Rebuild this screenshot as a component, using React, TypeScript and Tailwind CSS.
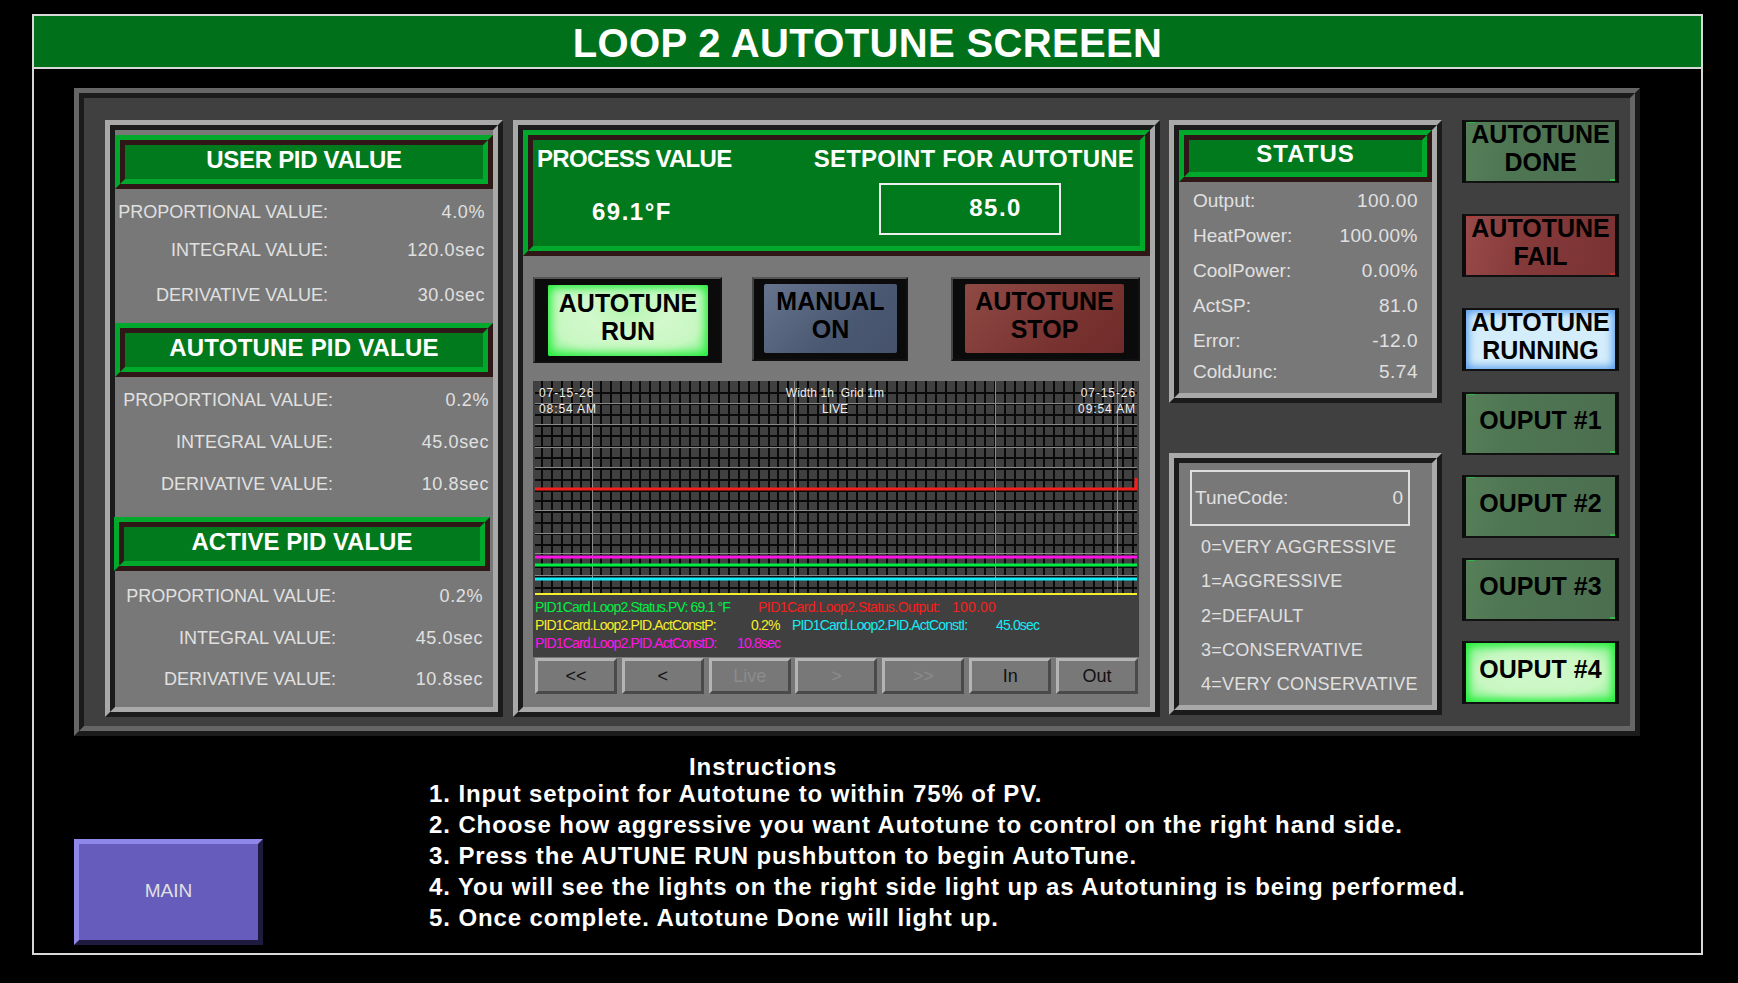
import type { ReactNode } from 'react'

const thin = 'text-[#e0e0e0] font-normal'

// double mitred border used by all the grey panels
function Panel({ className, children }: { className: string; children: ReactNode }) {
    return (
        <div className={`border-[5px] border-t-[#a9a9a9] border-l-[#a9a9a9] border-b-[#1b1b1b] border-r-[#1b1b1b] ${className}`}>
            <div className="h-full border-[5px] border-t-[#1b1b1b] border-l-[#1b1b1b] border-b-[#a9a9a9] border-r-[#a9a9a9] bg-[#787878]">
                {children}
            </div>
        </div>
    )
}

function GreenBox({ className, children }: { className: string; children: ReactNode }) {
    return (
        <div className={`border-[5px] border-t-[#00a92c] border-l-[#00a92c] border-b-[#301717] border-r-[#301717] ${className}`}>
            <div className="h-full border-[5px] border-t-[#301717] border-l-[#301717] border-b-[#00a92c] border-r-[#00a92c] bg-[#007a1c]">
                {children}
            </div>
        </div>
    )
}

function GreenTitle({ text, className, textClass }: { text: string; className: string; textClass?: string }) {
    return (
        <GreenBox className={className}>
            <div className={`flex h-full items-center justify-center pb-[4px] text-[24px] font-bold text-white ${textClass ?? ''}`}>{text}</div>
        </GreenBox>
    )
}

function PidRow({ label, value, labelClass, rowClass }: { label: string; value: string; labelClass: string; rowClass: string }) {
    return (
        <div className={`flex h-[30px] items-center justify-between pt-[1px] text-[18px] whitespace-nowrap ${thin} ${rowClass}`}>
            <span className={`text-right ${labelClass}`}>{label}</span>
            <span className="tracking-[0.6px]">{value}</span>
        </div>
    )
}

function StatusRow({ label, value, rowClass }: { label: string; value: string; rowClass: string }) {
    return (
        <div className={`flex h-[30px] items-center justify-between pr-[14px] pl-[14px] text-[19px] ${thin} ${rowClass}`}>
            <span>{label}</span>
            <span className="tracking-[0.5px]">{value}</span>
        </div>
    )
}

function Indicator({ lines, fill, glint, className }: { lines: string[]; fill: string; glint?: string; className: string }) {
    return (
        <div className={`h-[63px] w-[157px] border-y-2 border-x-[4px] border-y-[#111] border-x-[#0c0c0c] ${className}`}>
            <div className={`relative flex h-full flex-col items-center justify-center pb-[8px] text-[25px] leading-[28px] font-bold text-black ${fill}`}>
                {glint && <div className={`absolute top-0 left-[2px] h-[1px] w-[7px] ${glint}`} />}
                {glint && <div className={`absolute right-0 bottom-0 h-[2px] w-[5px] ${glint}`} />}
                {lines.map((l) => (
                    <div key={l}>{l}</div>
                ))}
            </div>
        </div>
    )
}

function PushButton({ lines, fill, frame, className }: { lines: string[]; fill: string; frame: string; className: string }) {
    return (
        <div className={`border-2 border-t-[#555] border-l-[#444] border-r-[#111] border-b-[#111] bg-[#0b0b0b] ${frame} ${className}`}>
            <div className={`flex h-full flex-col items-center justify-center rounded-[2px] pb-[8px] text-[25px] leading-[28px] font-bold text-black ${fill}`}>
                {lines.map((l) => (
                    <div key={l}>{l}</div>
                ))}
            </div>
        </div>
    )
}

function NavButton({ text, off }: { text: string; off?: boolean }) {
    return (
        <div
            className={`flex h-[36px] w-[82px] items-center justify-center border-[3px] border-t-[#b4b4b4] border-l-[#b4b4b4] border-b-[#4a4a4a] border-r-[#4a4a4a] bg-[#787878] text-[18px] ${off ? 'text-[#8c8c8c]' : 'text-[#111]'}`}
        >
            {text}
        </div>
    )
}

function Chart() {
    const minorH: number[] = []
    for (let y = 12; y < 216; y += 10.85) minorH.push(Math.round(y))
    const minorV: number[] = []
    for (let x = 9; x < 604; x += 9.85) minorV.push(Math.round(x))
    const majorH = [22, 43, 66, 86, 108, 129, 152, 172, 194]
    const majorV = [59, 261, 462, 584]
    const traces = [
        { y: 176, color: '#ff14e6', w: 3 },
        { y: 184, color: '#00ee44', w: 3 },
        { y: 198, color: '#14ecf5', w: 3 },
        { y: 213, color: '#f5ee2a', w: 2 },
    ]
    return (
        <div className="relative h-[216px] w-[606px] bg-[#404040]">
            <svg width="606" height="216" className="block">
                {minorV.map((x) => (
                    <line key={x} x1={x} x2={x} y1="0" y2="214" stroke="#0a0a0a" strokeWidth="2" />
                ))}
                {minorH.map((y) => (
                    <line key={y} x1="2" x2="604" y1={y} y2={y} stroke="#0a0a0a" strokeWidth="2" />
                ))}
                {majorH.map((y) => (
                    <line key={y} x1="2" x2="604" y1={y + 0.5} y2={y + 0.5} stroke="#8a8a8a" strokeWidth="1" />
                ))}
                {majorV.map((x) => (
                    <line key={x} x1={x + 0.5} x2={x + 0.5} y1="0" y2="214" stroke="#8a8a8a" strokeWidth="1" />
                ))}
                <path d="M2 108 H603 V97" fill="none" stroke="#f5201c" strokeWidth="3" />
                {traces.map((t) => (
                    <line key={t.y} x1="2" x2="604" y1={t.y} y2={t.y} stroke={t.color} strokeWidth={t.w} />
                ))}
            </svg>
            <div className="absolute top-[2px] left-[6px] text-[12px] leading-[16px] tracking-[0.9px] text-[#eee]">
                <div className="pt-[2px]">07-15-26</div>
                <div>08:54 AM</div>
            </div>
            <div className="absolute top-[2px] left-[200px] w-[208px] pt-[2px] text-center text-[12px] leading-[16px] text-[#eee]">
                <div className="-ml-[4px] tracking-[0.1px]">Width 1h&nbsp; Grid 1m</div>
                <div className="-ml-[4px]">LIVE</div>
            </div>
            <div className="absolute top-[2px] right-[3px] text-right text-[12px] leading-[16px] tracking-[0.9px] text-[#eee]">
                <div className="pt-[2px]">07-15-26</div>
                <div>09:54 AM</div>
            </div>
        </div>
    )
}

function Legend() {
    return (
        <div className="h-[60px] w-[606px] bg-[#404040] pt-[1px] pl-[2px] text-[14px] leading-[18px] tracking-[-0.85px] whitespace-nowrap">
            <div className="flex">
                <span className="w-[223px] text-[#00ee44]">PID1Card.Loop2.Status.PV: 69.1 °F</span>
                <span className="w-[194px] tracking-[-0.55px] text-[#f5201c]">PID1Card.Loop2.Status.Output:</span>
                <span className="tracking-[0.2px] text-[#f5201c]">100.00</span>
            </div>
            <div className="flex">
                <span className="w-[216px] text-[#f5ee2a]">PID1Card.Loop2.PID.ActConstP:</span>
                <span className="w-[41px] text-[#f5ee2a]">0.2%</span>
                <span className="w-[204px] text-[#14ecf5]">PID1Card.Loop2.PID.ActConstI:</span>
                <span className="text-[#14ecf5]">45.0sec</span>
            </div>
            <div className="flex">
                <span className="w-[202px] text-[#ff14e6]">PID1Card.Loop2.PID.ActConstD:</span>
                <span className="text-[#ff14e6]">10.8sec</span>
            </div>
        </div>
    )
}

export default function App() {
    const dim = 'bg-[linear-gradient(100deg,#557f59,#4f7653_30%,#4b6e4f)]'
    return (
        <div className="h-[983px] w-[1738px] overflow-hidden bg-black pt-[14px] pl-[32px] font-['Liberation_Sans',Arial,sans-serif]">
            <div className="h-[941px] w-[1671px] border-2 border-[#d8d8d8]">
                {/* Title */}
                <div className="flex h-[53px] items-center justify-center border-b-2 border-b-[#d8d8d8] bg-[#00701a] pt-[2px] text-[40px] font-bold tracking-[0.35px] text-white">
                    LOOP 2 AUTOTUNE SCREEEN
                </div>

                {/* Machine panel */}
                <div className="mt-[19px] ml-[40px] h-[648px] w-[1566px] border-[5px] border-t-[#666] border-l-[#666] border-b-[#1b1b1b] border-r-[#1b1b1b]">
                    <div className="flex h-full items-start border-[5px] border-t-[#1b1b1b] border-l-[#1b1b1b] border-b-[#666] border-r-[#666] bg-[#404040] pt-[22px] pl-[21px]">
                        {/* PID values */}
                        <Panel className="h-[597px] w-[398px]">
                            <GreenTitle text="USER PID VALUE" className="mt-[5px] h-[54px]" textClass="tracking-[-0.3px]" />
                            <PidRow label="PROPORTIONAL VALUE:" value="4.0%" labelClass="w-[213px]" rowClass="mt-[8px] pr-[8px]" />
                            <PidRow label="INTEGRAL VALUE:" value="120.0sec" labelClass="w-[213px]" rowClass="mt-[8px] pr-[8px]" />
                            <PidRow label="DERIVATIVE VALUE:" value="30.0sec" labelClass="w-[213px]" rowClass="mt-[15px] pr-[8px]" />
                            <GreenTitle text="AUTOTUNE PID VALUE" className="mt-[13px] h-[54px]" textClass="tracking-[0.2px]" />
                            <PidRow label="PROPORTIONAL VALUE:" value="0.2%" labelClass="w-[218px]" rowClass="mt-[8px] pr-[4px]" />
                            <PidRow label="INTEGRAL VALUE:" value="45.0sec" labelClass="w-[218px]" rowClass="mt-[12px] pr-[4px]" />
                            <PidRow label="DERIVATIVE VALUE:" value="10.8sec" labelClass="w-[218px]" rowClass="mt-[12px] pr-[4px]" />
                            <GreenTitle text="ACTIVE PID VALUE" className="mt-[18px] -ml-[1px] h-[54px] w-[376px]" />
                            <PidRow label="PROPORTIONAL VALUE:" value="0.2%" labelClass="w-[221px]" rowClass="mt-[10px] pr-[10px]" />
                            <PidRow label="INTEGRAL VALUE:" value="45.0sec" labelClass="w-[221px]" rowClass="mt-[12px] pr-[10px]" />
                            <PidRow label="DERIVATIVE VALUE:" value="10.8sec" labelClass="w-[221px]" rowClass="mt-[11px] pr-[10px]" />
                        </Panel>

                        {/* Center */}
                        <Panel className="ml-[10px] h-[597px] w-[647px]">
                            <GreenBox className="h-[126px]">
                                <div className="pr-[6px] pl-[4px] text-white">
                                    <div className="flex justify-between pt-[5px] text-[24px] leading-[28px] font-bold">
                                        <span className="tracking-[-0.7px]">PROCESS VALUE</span>
                                        <span className="tracking-[0.2px]">SETPOINT FOR AUTOTUNE</span>
                                    </div>
                                    <div className="flex">
                                        <div className="mt-[25px] ml-[55px] text-[24px] leading-[28px] font-bold tracking-[1.5px]">69.1°F</div>
                                        <div className="mt-[10px] ml-[207px] h-[52px] w-[182px] border-2 border-[#eee] pt-[9px] pr-[37px] text-right text-[24px] leading-[28px] font-bold tracking-[1.5px]">
                                            85.0
                                        </div>
                                    </div>
                                </div>
                            </GreenBox>

                            <div className="mt-[21px] flex h-[86px] items-start pl-[10px]">
                                <PushButton
                                    lines={['AUTOTUNE', 'RUN']}
                                    frame="h-[86px] w-[189px] pt-[6px] pr-[12px] pb-[5px] pl-[13px]"
                                    fill="bg-[radial-gradient(ellipse_at_50%_35%,#b4f5ae_0%,#d2f8cc_35%,#c8f7c2_70%,#7cf284_100%)] shadow-[inset_0_0_10px_3px_#1fee38]"
                                    className=""
                                />
                                <PushButton
                                    lines={['MANUAL', 'ON']}
                                    frame="h-[84px] w-[156px] pt-[5px] pr-[9px] pb-[6px] pl-[10px]"
                                    fill="bg-[linear-gradient(135deg,#66748e,#4b5872_60%,#46526b)]"
                                    className="ml-[30px]"
                                />
                                <PushButton
                                    lines={['AUTOTUNE', 'STOP']}
                                    frame="h-[84px] w-[189px] pt-[5px] pr-[14px] pb-[6px] pl-[12px]"
                                    fill="bg-[linear-gradient(135deg,#8f4a46,#7a3431_60%,#6f2b2a)]"
                                    className="ml-[43px]"
                                />
                            </div>

                            <div className="mt-[18px] ml-[10px]">
                                <Chart />
                                <Legend />
                                <div className="mt-[1px] ml-[2px] flex w-[603px] justify-between">
                                    <NavButton text="<<" />
                                    <NavButton text="<" />
                                    <NavButton text="Live" off />
                                    <NavButton text=">" off />
                                    <NavButton text=">>" off />
                                    <NavButton text="In" />
                                    <NavButton text="Out" />
                                </div>
                            </div>
                        </Panel>

                        {/* Status and tune code */}
                        <div className="ml-[9px] w-[273px]">
                            <Panel className="h-[283px]">
                                <GreenTitle text="STATUS" className="h-[52px]" textClass="tracking-[1px]" />
                                <StatusRow label="Output:" value="100.00" rowClass="mt-[4px]" />
                                <StatusRow label="HeatPower:" value="100.00%" rowClass="mt-[5px]" />
                                <StatusRow label="CoolPower:" value="0.00%" rowClass="mt-[5px]" />
                                <StatusRow label="ActSP:" value="81.0" rowClass="mt-[5px]" />
                                <StatusRow label="Error:" value="-12.0" rowClass="mt-[5px]" />
                                <StatusRow label="ColdJunc:" value="5.74" rowClass="mt-[1px]" />
                            </Panel>
                            <Panel className="mt-[50px] h-[262px]">
                                <div className="mt-[7px] ml-[11px] flex h-[56px] w-[220px] items-center justify-between border-2 border-[#ddd] pr-[5px] pl-[3px] text-[19px] text-[#e0e0e0]">
                                    <span>TuneCode:</span>
                                    <span>0</span>
                                </div>
                                <div className="mt-[6px] pl-[22px] text-[18px] tracking-[0.25px] whitespace-nowrap text-[#e0e0e0]">
                                    <div className="flex h-[30px] items-center">0=VERY AGGRESSIVE</div>
                                    <div className="mt-[4px] flex h-[30px] items-center">1=AGGRESSIVE</div>
                                    <div className="mt-[5px] flex h-[30px] items-center">2=DEFAULT</div>
                                    <div className="mt-[4px] flex h-[30px] items-center">3=CONSERVATIVE</div>
                                    <div className="mt-[4px] flex h-[30px] items-center">4=VERY CONSERVATIVE</div>
                                </div>
                            </Panel>
                        </div>

                        {/* Indicator lights */}
                        <div className="ml-[20px]">
                            <Indicator lines={['AUTOTUNE', 'DONE']} fill={dim} glint="bg-[#2fb84a]" className="" />
                            <Indicator lines={['AUTOTUNE', 'FAIL']} fill="bg-[linear-gradient(100deg,#994a4a,#853a3a_40%,#7a3232)]" glint="bg-[#c0302c]" className="mt-[31px]" />
                            <Indicator lines={['AUTOTUNE', 'RUNNING']} fill="bg-[#d4edfb] shadow-[inset_0_0_8px_2px_#4f97ec]" className="mt-[31px]" />
                            <Indicator lines={['OUPUT #1']} fill={dim} glint="bg-[#2fb84a]" className="mt-[21px]" />
                            <Indicator lines={['OUPUT #2']} fill={dim} glint="bg-[#2fb84a]" className="mt-[20px]" />
                            <Indicator lines={['OUPUT #3']} fill={dim} glint="bg-[#2fb84a]" className="mt-[20px]" />
                            <Indicator
                                lines={['OUPUT #4']}
                                fill="bg-[radial-gradient(ellipse_at_center,#d2f8cc_0%,#c8f7c2_60%,#7cf284_100%)] shadow-[inset_0_0_9px_3px_#1fee38]"
                                className="mt-[20px]"
                            />
                        </div>
                    </div>
                </div>

                {/* Bottom */}
                <div className="ml-[40px] flex items-start">
                    <div className="mt-[103px] flex h-[106px] w-[189px] items-center justify-center border-[5px] border-t-[#8f88ea] border-l-[#8f88ea] border-b-[#1e1a40] border-r-[#1e1a40] bg-[#655cbb] pb-[2px] text-[19px] text-[#e0e0e0]">
                        MAIN
                    </div>
                    <div className="mt-[20px] ml-[166px] text-[24px] font-bold tracking-[0.9px] whitespace-nowrap text-white">
                        <div className="ml-[260px] leading-[22px]">Instructions</div>
                        <div className="leading-[31px]">1. Input setpoint for Autotune to within 75% of PV.</div>
                        <div className="leading-[31px]">2. Choose how aggressive you want Autotune to control on the right hand side.</div>
                        <div className="leading-[31px]">3. Press the AUTUNE RUN pushbutton to begin AutoTune.</div>
                        <div className="leading-[31px]">4. You will see the lights on the right side light up as Autotuning is being performed.</div>
                        <div className="leading-[31px]">5. Once complete. Autotune Done will light up.</div>
                    </div>
                </div>
            </div>
        </div>
    )
}
